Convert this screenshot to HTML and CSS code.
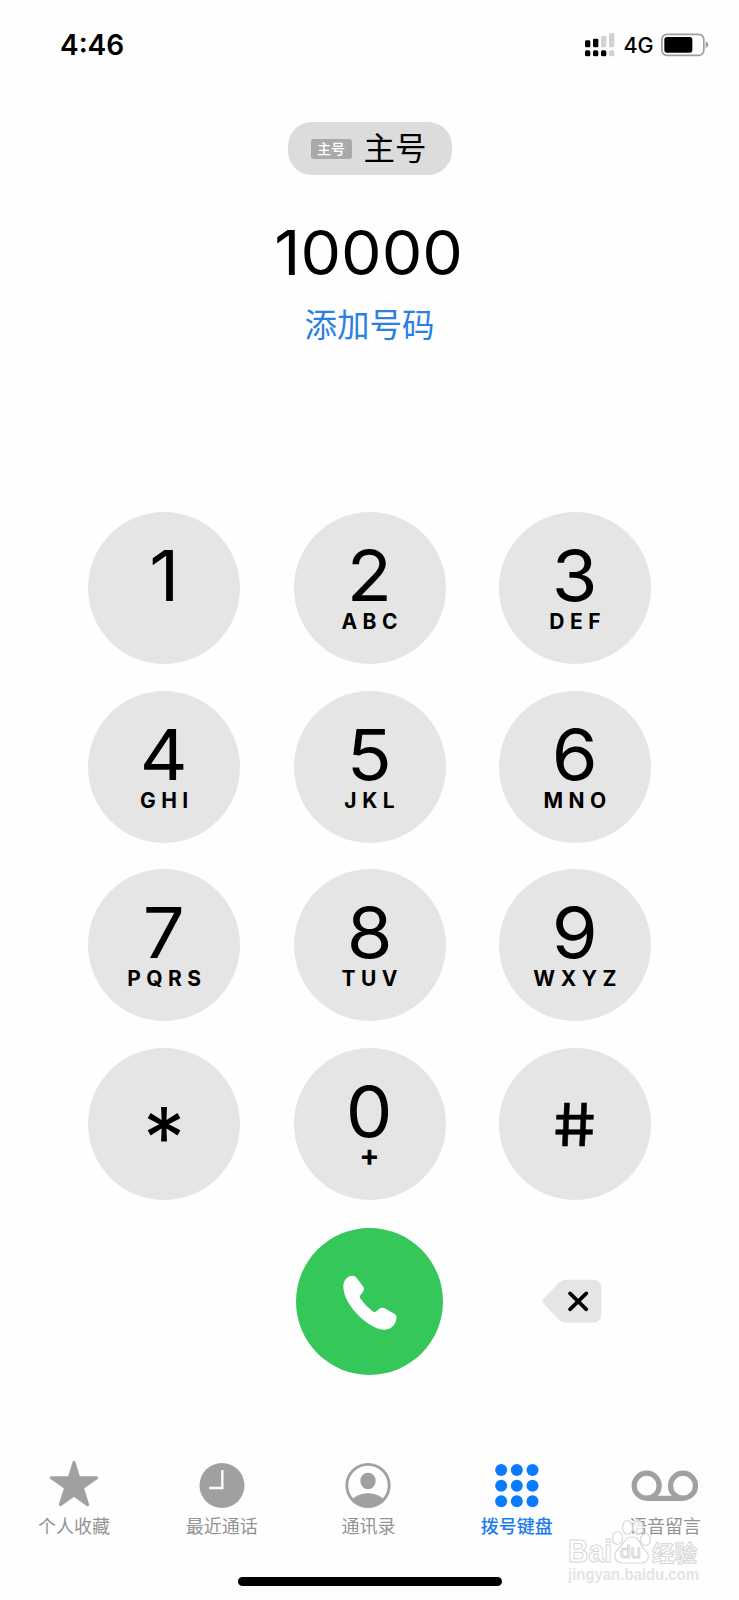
FILE: index.html
```html
<!DOCTYPE html>
<html lang="zh-CN">
<head>
<meta charset="utf-8">
<title>拨号键盘</title>
<link rel="stylesheet" href="styles.css">
</head>
<body>
<header class="status">
  <span class="time">4:46</span>
  <div class="indicators">
    <svg class="signal" width="30" height="24" viewBox="0 0 90 72">
      <g fill="#000"><rect x="0" y="22" width="16" height="21" rx="4"/><rect x="24" y="17" width="16" height="26" rx="4"/><rect x="0" y="52" width="16" height="18" rx="5"/><rect x="24" y="52" width="16" height="18" rx="5"/><rect x="48" y="52" width="16" height="18" rx="5"/></g>
      <g fill="#d2d2d2"><rect x="48" y="9" width="16" height="34" rx="4"/><rect x="72" y="0" width="16" height="43" rx="4"/><rect x="72" y="52" width="16" height="18" rx="5"/></g>
    </svg>
    <span class="network">4G</span>
    <svg class="battery" width="48" height="24" viewBox="0 0 144 72">
      <rect x="2.5" y="4" width="126" height="63" rx="15" fill="none" stroke="#9e9e9e" stroke-width="5"/>
      <rect x="10" y="12" width="84" height="47" rx="8" fill="#000"/>
      <path d="M134 25q8 4 8 10.500t-8 10.500z" fill="#9e9e9e"/>
    </svg>
  </div>
</header>

<section class="display">
  <div class="line-pill"><span class="badge">主号</span><span class="line-name">主号</span></div>
  <div class="number">10000</div>
  <a class="add">添加号码</a>
</section>

<main class="keypad">
  <div class="key"><span class="digit">1</span></div>
  <div class="key"><span class="digit">2</span><span class="letters">ABC</span></div>
  <div class="key"><span class="digit">3</span><span class="letters">DEF</span></div>
  <div class="key"><span class="digit">4</span><span class="letters">GHI</span></div>
  <div class="key"><span class="digit">5</span><span class="letters">JKL</span></div>
  <div class="key"><span class="digit">6</span><span class="letters">MNO</span></div>
  <div class="key"><span class="digit">7</span><span class="letters">PQRS</span></div>
  <div class="key"><span class="digit">8</span><span class="letters">TUV</span></div>
  <div class="key"><span class="digit">9</span><span class="letters">WXYZ</span></div>
  <div class="key"><span class="star">*</span></div>
  <div class="key"><span class="digit">0</span><span class="letters plus">+</span></div>
  <div class="key"><span class="hash">#</span></div>
</main>

<section class="actions">
  <div class="call">
    <svg width="56" height="56" viewBox="215 190 168 168"><path fill="#fff" d="M219 226C220 208 231 195 247 195Q254 195 259 202L280 230Q284 237 278 243L269 255Q267 260 271 265Q287 288 309 303Q314 306 319 301L329 293Q336 289 343 293L373 310Q380 315 378 325C375 345 360 357 343 357C316 357 282 334 257 306C233 280 219 252 219 226Z"/></svg>
  </div>
  <svg class="delete" width="60" height="44" viewBox="814 208 180 132">
    <path fill="#e5e5e5" d="M817 269L862 222Q874 210 888 210H967Q992 210 992 235V314Q992 339 967 339H888Q874 339 862 328L817 280Q813 274 817 269Z"/>
    <path d="M898 251L947 299M947 251L898 299" stroke="#000" stroke-width="11" stroke-linecap="round"/>
  </svg>
</section>

<nav class="tabs">
  <div class="tab">
    <svg width="50" height="50" viewBox="147 60 150 150"><path d="M222 67L236 113H290L247 143L263 194L222 165L181 194L197 143L154 113H208Z" fill="#a0a0a0" stroke="#a0a0a0" stroke-width="9" stroke-linejoin="round"/></svg>
    <span>个人收藏</span>
  </div>
  <div class="tab">
    <svg width="50" height="50" viewBox="592 60 150 150"><circle cx="667" cy="136.500" r="67.500" fill="#a0a0a0"/><path d="M668 90V144H629" fill="none" stroke="#fff" stroke-width="7"/></svg>
    <span>最近通话</span>
  </div>
  <div class="tab contacts">
    <svg width="50" height="50" viewBox="131 60 150 150"><clipPath id="ring"><circle cx="206" cy="136.500" r="64"/></clipPath><g fill="#a0a0a0"><ellipse cx="206" cy="123" rx="23" ry="25"/><ellipse cx="206" cy="199" rx="56" ry="39" clip-path="url(#ring)"/></g><circle cx="206" cy="136.500" r="63.500" fill="none" stroke="#a0a0a0" stroke-width="8.500"/></svg>
    <span>通讯录</span>
  </div>
  <div class="tab active">
    <svg width="50" height="50" viewBox="576 60 150 150"><g fill="#0a7aff"><circle cx="603.500" cy="90" r="18"/><circle cx="650.500" cy="90" r="18"/><circle cx="697.500" cy="90" r="18"/><circle cx="603.500" cy="137" r="18"/><circle cx="650.500" cy="137" r="18"/><circle cx="697.500" cy="137" r="18"/><circle cx="603.500" cy="184" r="18"/><circle cx="650.500" cy="184" r="18"/><circle cx="697.500" cy="184" r="18"/></g></svg>
    <span>拨号键盘</span>
  </div>
  <div class="tab">
    <svg width="68" height="50" viewBox="274 60 204 150"><g fill="none" stroke="#a0a0a0" stroke-width="15.500"><circle cx="321" cy="137" r="37.500"/><circle cx="430" cy="137" r="37.500"/><path d="M321 175H430"/></g></svg>
    <span>语音留言</span>
  </div>
</nav>
<div class="home"></div>

<svg class="watermark" width="140" height="76" viewBox="0 0 140 76">
  <g fill="#fff" fill-opacity=".75" stroke="#d8d8d8" stroke-width="1.200">
    <ellipse cx="51.500" cy="18" rx="5" ry="6.500"/>
    <ellipse cx="61.500" cy="7.500" rx="5" ry="7"/>
    <ellipse cx="72" cy="7.500" rx="5" ry="7"/>
    <ellipse cx="79.500" cy="19.500" rx="5" ry="6"/>
    <path d="M66 17C74 17 74 26 79 30C85 36 82 43 75 43H57C49 43 46 35 52 29C58 25 58 17 66 17Z"/>
  </g>
  <g class="wm-text">
    <text x="2" y="42" font-size="31" font-weight="700" textLength="44" lengthAdjust="spacingAndGlyphs">Bai</text>
    <text x="54" y="38" font-size="18" textLength="21" lengthAdjust="spacingAndGlyphs">du</text>
    <text x="86" y="41" font-size="22" font-weight="700" textLength="45" lengthAdjust="spacingAndGlyphs">经验</text>
    <text class="url" x="2" y="60" font-size="16" font-weight="700" textLength="131" lengthAdjust="spacingAndGlyphs">jingyan.baidu.com</text>
  </g>
</svg>
</body>
</html>
```
FILE: styles.css
```css
* { box-sizing: border-box; }
body {
  margin: 0;
  width: 739px;
  height: 1600px;
  position: relative;
  overflow: hidden;
  background: #fefefe;
  color: #000;
  font-family: Inter, "Noto Sans CJK SC", sans-serif;
  display: flex;
  flex-direction: column;
}
svg { display: block; }
.status {
  height: 122px;
  padding: 29px 30px 0 60px;
  display: flex;
  justify-content: space-between;
  align-items: flex-start;
}
.time { font-size: 28px; line-height: 32px; font-weight: 600; }
.indicators { display: flex; align-items: flex-start; }
.signal { margin-top: 4px; }
.network { font-size: 21.5px; line-height: 32px; font-weight: 500; width: 28px; margin: 0 9.5px 0 9px; white-space: nowrap; }
.battery { margin-top: 3.5px; }

.display { height: 390.2px; display: flex; flex-direction: column; align-items: center; }
.line-pill {
  width: 164px;
  height: 53px;
  border-radius: 24px;
  background: #dcdcdc;
  display: flex;
  align-items: center;
  padding-left: 23px;
}
.badge {
  width: 41px;
  height: 20px;
  border-radius: 3px;
  background: #a9a9ab;
  color: #fff;
  font-size: 14px;
  line-height: 19px;
  font-weight: 500;
  text-align: center;
}
.line-name { font-size: 31.5px; line-height: 48px; margin: 1px 0 0 12px; }
.number { font-size: 62.5px; line-height: 64px; margin: 45px 2px 0 0; transform: scaleX(1.03); }
.add { font-size: 32.5px; line-height: 48px; margin-top: 17.5px; color: #2b80e4; }

.keypad {
  display: grid;
  grid-template-columns: repeat(3, 152px);
  grid-auto-rows: 152px;
  gap: 26.6px 53.4px;
  justify-content: center;
  height: 716px;
}
.key {
  border-radius: 50%;
  background: #e5e5e5;
  display: flex;
  flex-direction: column;
  align-items: center;
  padding-top: 29px;
}
.digit { font-size: 70px; line-height: 70px; transform: scaleX(1.06); }
.letters { font-size: 21px; line-height: 22px; font-weight: 700; letter-spacing: 5.5px; margin-right: -5.5px; }
.plus { font-size: 30px; line-height: 16px; letter-spacing: 0; margin-right: 0; }
.star { font-size: 84px; line-height: 96px; padding-top: 13px; }
.hash { font-size: 59px; line-height: 96px; -webkit-text-stroke: .5px #000; transform: scaleX(1.14) skewX(7deg); }

.actions {
  height: 225.8px;
  display: grid;
  grid-template-columns: 296px 147px 159px;
  align-items: start;
}
.call {
  grid-column: 2;
  width: 147px;
  height: 147px;
  border-radius: 50%;
  background: #35c759;
  display: flex;
  align-items: center;
  justify-content: center;
}
.delete { justify-self: end; margin-top: 51px; }

.tabs {
  height: 123px;
  padding-top: 6px;
  display: grid;
  grid-template-columns: repeat(5, 1fr);
}
.tab { display: flex; flex-direction: column; align-items: center; color: #949494; font-size: 18px; line-height: 26px; }
.tab span { margin-top: 4px; }
.contacts { padding-right: 2px; }
.active { color: #1a7cec; font-weight: 500; padding-right: 1px; }
.home { width: 264px; height: 9px; border-radius: 5px; background: #000; align-self: center; }
.watermark { position: absolute; left: 566px; top: 1520px; overflow: visible; }
.wm-text { fill: #fff; stroke: #d6d6d6; stroke-width: 1px; font-family: "Liberation Sans", "Noto Sans CJK SC", sans-serif; }
.url { fill: #e4e4e4; stroke: none; }
```
